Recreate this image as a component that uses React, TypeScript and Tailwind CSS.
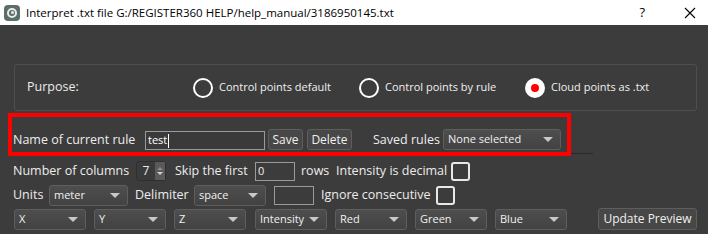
const font = { fontFamily: '"Open Sans", "Noto Sans", "Liberation Sans", sans-serif' };

const Combo = ({ label, className = "" }: { label: string; className?: string }) => (
  <div
    className={`flex items-center justify-between h-[21px] rounded-[3px] border border-[#5e5e5e] bg-gradient-to-b from-[#4e4e4e] to-[#424242] pl-[4px] pr-[7px] text-[11px] text-[#f0f0f0] ${className}`}
  >
    <span>{label}</span>
    <span className="w-0 h-0 border-l-[5px] border-r-[5px] border-t-[5px] border-l-transparent border-r-transparent border-t-[#c8c8c8]" />
  </div>
);

const Button = ({ label, className = "" }: { label: string; className?: string }) => (
  <div
    className={`flex items-center justify-center h-[21px] rounded-[3px] border border-[#5e5e5e] bg-[#474747] text-[12px] text-[#f0f0f0] ${className}`}
  >
    {label}
  </div>
);

const Radio = ({ label, checked }: { label: string; checked?: boolean }) => (
  <div className="flex items-center gap-[6px] w-[166px]">
    {checked ? (
      <span className="w-[20px] h-[20px] rounded-full bg-white flex items-center justify-center">
        <span className="w-[8px] h-[8px] rounded-full bg-[#ff0000]" />
      </span>
    ) : (
      <span className="w-[20px] h-[20px] rounded-full border-2 border-white" />
    )}
    <span className="text-[11px] text-[#f0f0f0]">{label}</span>
  </div>
);

const Check = ({ className = "" }: { className?: string }) => (
  <span className={`w-[19px] h-[19px] rounded-[3px] border-2 border-[#e8e8e8] ${className}`} />
);

export default function App() {
  return (
    <div className="w-[708px] h-[234px] flex flex-col overflow-hidden" style={font}>
      {/* title bar */}
      <div className="h-[25px] bg-white flex items-center text-[11.5px] text-black">
        <div className="ml-[4px] w-[16px] h-[16px] rounded-[4px] bg-[#5d6e68] flex items-center justify-center">
          <div className="w-[10px] h-[10px] rounded-full border-2 border-[#e8ecea] flex items-center justify-center">
            <div className="w-[3px] h-[3px] rounded-full bg-[#e8ecea]" />
          </div>
        </div>
        <span className="ml-[6px]">Interpret .txt file G:/REGISTER360 HELP/help_manual/3186950145.txt</span>
        <span className="ml-auto mr-[39px] text-[13px]">?</span>
        <svg width="12" height="12" viewBox="0 0 12 12" className="mr-[12px]">
          <path d="M1 1 L11 11 M11 1 L1 11" stroke="#000" strokeWidth="1.1" />
        </svg>
      </div>

      {/* body */}
      <div className="flex-1 bg-[#3c3c3c] text-[#ececec] text-[12.5px]">
        {/* purpose group */}
        <div className="mt-[39px] ml-[14px] w-[683px] h-[47px] border border-[#4f4f4f] rounded-[3px] flex items-center">
          <span className="ml-[12px] w-[166px]">Purpose:</span>
          <Radio label="Control points default" />
          <Radio label="Control points by rule" />
          <Radio label="Cloud points as .txt" checked />
        </div>

        {/* rule row */}
        <div className="mt-[2px] ml-[8px] flex items-end">
          <div className="w-[563px] h-[43px] border-[4px] border-[#ff0000] flex items-end pb-[2px] pl-[1px]">
            <span className="w-[132px]">Name of current rule</span>
            <div className="w-[120px] h-[19px] border border-[#9a9a9a] bg-[#3a3a3a] flex items-center pl-[2px] text-[11px] text-white">
              test<span className="ml-[1px] w-px h-[14px] bg-white" />
            </div>
            <Button label="Save" className="ml-[3px] w-[35px]" />
            <Button label="Delete" className="ml-[4px] w-[45px]" />
            <span className="ml-[21px] w-[70px]">Saved rules</span>
            <Combo label="None selected" className="w-[118px]" />
          </div>
          <div className="w-[22px] h-px bg-[#2a2a2a] mb-[2px]" />
        </div>

        {/* columns row */}
        <div className="mt-[5px] ml-[13px] flex items-center h-[20px]">
          <span className="w-[123px]">Number of columns</span>
          <div className="w-[30px] h-[20px] rounded-[3px] border border-[#2f2f2f] bg-[#3a3a3a] flex">
            <span className="flex-1 flex items-center justify-center text-[12px]">7</span>
            <span className="w-[10px] bg-[#5a5a5a] flex flex-col items-center justify-center gap-[2px]">
              <span className="w-0 h-0 border-l-[3px] border-r-[3px] border-b-[3px] border-l-transparent border-r-transparent border-b-[#8a8a8a]" />
              <span className="w-0 h-0 border-l-[3px] border-r-[3px] border-t-[3px] border-l-transparent border-r-transparent border-t-[#d0d0d0]" />
            </span>
          </div>
          <span className="ml-[9px] w-[80px]">Skip the first</span>
          <div className="w-[40px] h-[19px] border border-[#9a9a9a] flex items-center pl-[2px] text-[11px]">0</div>
          <span className="ml-[6px] w-[35px]">rows</span>
          <span className="w-[115px]">Intensity is decimal</span>
          <Check />
        </div>

        {/* units row */}
        <div className="mt-[4px] ml-[13px] flex items-center h-[20px]">
          <span className="w-[36px]">Units</span>
          <Combo label="meter" className="w-[79px]" />
          <span className="ml-[7px] w-[59px]">Delimiter</span>
          <Combo label="space" className="w-[72px]" />
          <div className="ml-[8px] w-[40px] h-[19px] border border-[#9a9a9a]" />
          <span className="ml-[7px] w-[115px]">Ignore consecutive</span>
          <Check />
        </div>

        {/* column mapping row */}
        <div className="mt-[3px] ml-[14px] flex items-center">
          <Combo label="X" className="w-[72px]" />
          <Combo label="Y" className="ml-[8px] w-[72px]" />
          <Combo label="Z" className="ml-[8px] w-[72px]" />
          <Combo label="Intensity" className="ml-[9px] w-[72px]" />
          <Combo label="Red" className="ml-[8px] w-[72px]" />
          <Combo label="Green" className="ml-[8px] w-[72px]" />
          <Combo label="Blue" className="ml-[8px] w-[72px]" />
          <Button label="Update Preview" className="ml-[31px] w-[99px] h-[22px] text-[12.5px]" />
        </div>
      </div>
    </div>
  );
}
